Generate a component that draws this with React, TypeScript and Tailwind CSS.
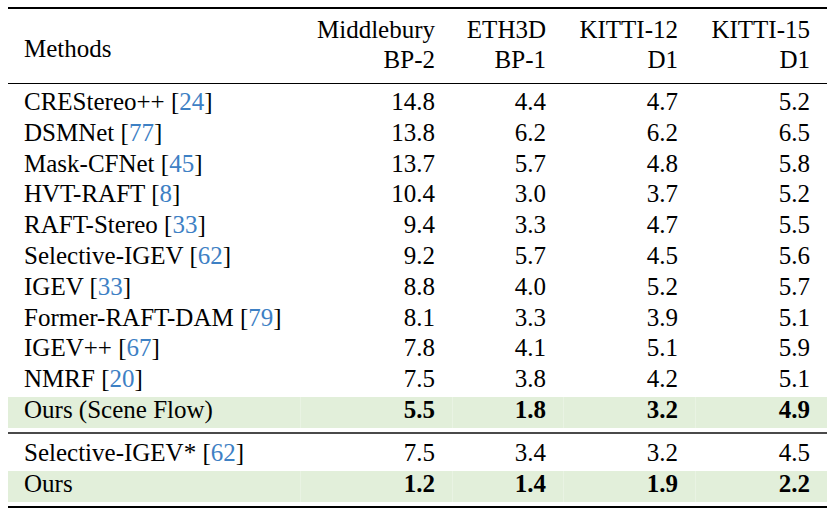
import React from 'react';

type Row = {
  name: string;
  cite?: string;
  vals: string[];
  ours?: boolean;
};

const MAIN_ROWS: Row[] = [
  { name: 'CREStereo++', cite: '24', vals: ['14.8', '4.4', '4.7', '5.2'] },
  { name: 'DSMNet', cite: '77', vals: ['13.8', '6.2', '6.2', '6.5'] },
  { name: 'Mask-CFNet', cite: '45', vals: ['13.7', '5.7', '4.8', '5.8'] },
  { name: 'HVT-RAFT', cite: '8', vals: ['10.4', '3.0', '3.7', '5.2'] },
  { name: 'RAFT-Stereo', cite: '33', vals: ['9.4', '3.3', '4.7', '5.5'] },
  { name: 'Selective-IGEV', cite: '62', vals: ['9.2', '5.7', '4.5', '5.6'] },
  { name: 'IGEV', cite: '33', vals: ['8.8', '4.0', '5.2', '5.7'] },
  { name: 'Former-RAFT-DAM', cite: '79', vals: ['8.1', '3.3', '3.9', '5.1'] },
  { name: 'IGEV++', cite: '67', vals: ['7.8', '4.1', '5.1', '5.9'] },
  { name: 'NMRF', cite: '20', vals: ['7.5', '3.8', '4.2', '5.1'] },
  { name: 'Ours (Scene Flow)', vals: ['5.5', '1.8', '3.2', '4.9'], ours: true },
];

const FT_ROWS: Row[] = [
  { name: 'Selective-IGEV*', cite: '62', vals: ['7.5', '3.4', '3.2', '4.5'] },
  { name: 'Ours', vals: ['1.2', '1.4', '1.9', '2.2'], ours: true },
];

// column widths follow the cell colour boundaries in the reference
const COL_W = ['w-[152px]', 'w-[111px]', 'w-[132px]', 'w-[132px]'];

const HEADERS = [
  ['Middlebury', 'BP-2'],
  ['ETH3D', 'BP-1'],
  ['KITTI-12', 'D1'],
  ['KITTI-15', 'D1'],
];

const TableRow: React.FC<{ row: Row; h: string }> = ({ row, h }) => {
  const bg = row.ours ? 'bg-[#e2efda]' : '';
  return (
    <div className={`flex ${h} leading-[25px]`}>
      <div className={`w-[292px] pl-[16px] ${bg}`}>
        {row.name}
        {row.cite && (
          <>
            {' '}[<span className="text-[#3d80c4]">{row.cite}</span>]
          </>
        )}
      </div>
      {row.vals.map((v, i) => (
        <div
          key={i}
          className={`${COL_W[i]} pr-[17px] text-right ${bg} ${row.ours ? 'font-bold border-l border-[#e9f3e3]' : ''}`}
        >
          {v}
        </div>
      ))}
    </div>
  );
};

export default function App() {
  return (
    <div className="w-[831px] h-[515px] bg-white text-black font-['Liberation_Serif',serif] text-[25px] pt-[7px]">
      <div className="ml-[8px] w-[819px]">
        <div className="h-[2px] bg-black" />

        <div className="flex h-[74px] leading-[30px]">
          <div className="w-[292px] pl-[16px] pt-[25px]">Methods</div>
          {HEADERS.map((hd, i) => (
            <div key={i} className={`${COL_W[i]} pr-[17px] pt-[6px] text-right`}>
              <div>{hd[0]}</div>
              <div>{hd[1]}</div>
            </div>
          ))}
        </div>

        <div className="h-px bg-black" />
        <div className="h-[5px]" />

        {MAIN_ROWS.map((r) => (
          <TableRow key={r.name} row={r} h="h-[30.8px]" />
        ))}

        <div className="h-[4px]" />
        <div className="h-[2px] bg-[#4a4a4a]" />
        <div className="h-[6px]" />

        {FT_ROWS.map((r) => (
          <TableRow key={r.name} row={r} h="h-[31px]" />
        ))}

        <div className="h-[4px]" />
        <div className="h-[2px] bg-black" />
      </div>
    </div>
  );
}
